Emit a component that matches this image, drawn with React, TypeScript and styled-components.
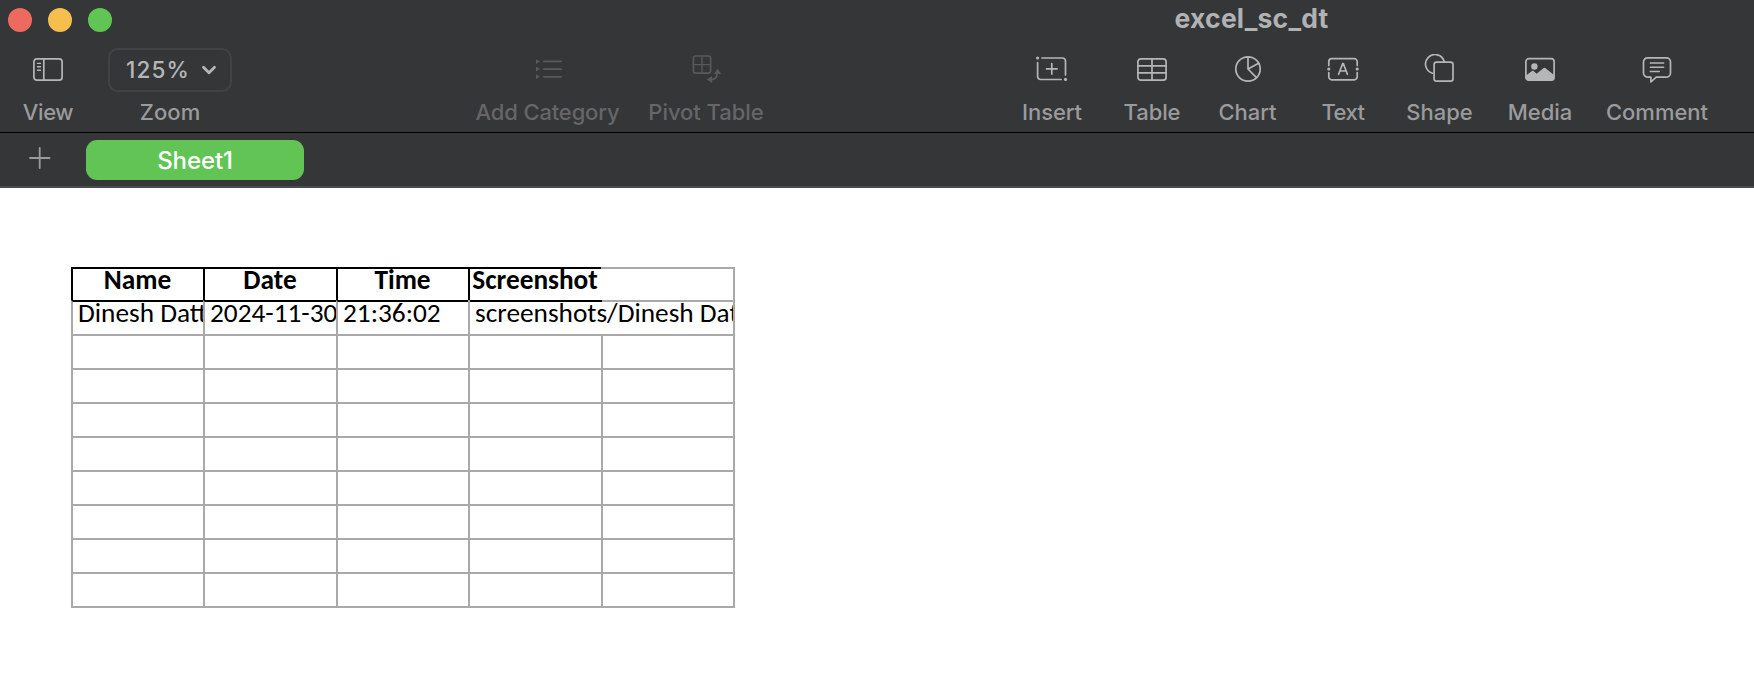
import React from "react";
import styled, { createGlobalStyle } from "styled-components";

const GlobalStyle = createGlobalStyle`
  *, *::before, *::after { box-sizing: border-box; }
  html, body { margin: 0; padding: 0; background: #fff; }
`;

const Window = styled.div`
  display: flex;
  flex-direction: column;
  width: 1754px;
  height: 688px;
  overflow: hidden;
  background: #fff;
  font-family: Inter, "Liberation Sans", sans-serif;
`;

const Header = styled.header`
  display: flex;
  flex-direction: column;
  height: 133px;
  background: #353638;
  border-bottom: 1px solid #000;
`;

const TitleBar = styled.div`
  display: grid;
  grid-template-columns: 749px 1fr;
  align-items: center;
  height: 40px;
`;

const TrafficLights = styled.div`
  display: flex;
  gap: 16px;
  padding-left: 8px;
`;

const Light = styled.span<{ $color: string }>`
  width: 24px;
  height: 24px;
  border-radius: 50%;
  background: ${(p) => p.$color};
`;

const DocTitle = styled.h1`
  margin: 0;
  padding-bottom: 5px;
  text-align: center;
  font-size: 26.5px;
  line-height: 32px;
  font-weight: 700;
  letter-spacing: 0.2px;
  color: #b1b2b4;
`;

const Toolbar = styled.div`
  display: flex;
  justify-content: space-between;
  padding: 8px 34px 0 0;
`;

const ToolGroup = styled.div<{ $trailing?: number }>`
  display: flex;
  margin-right: ${(p) => p.$trailing ?? 0}px;
`;

const ToolButton = styled.div<{ $width: number; $disabled?: boolean }>`
  display: flex;
  flex-direction: column;
  align-items: center;
  width: ${(p) => p.$width}px;
  color: ${(p) => (p.$disabled ? "#58595b" : "#b5b6b8")};
`;

const ToolFace = styled.div`
  display: flex;
  align-items: center;
  justify-content: center;
  height: 44px;
`;

const ToolLabel = styled.span<{ $disabled?: boolean; $spacing?: number }>`
  margin-top: 7px;
  font-size: 22px;
  line-height: 26px;
  font-weight: 450;
  white-space: nowrap;
  letter-spacing: ${(p) => p.$spacing ?? 0}px;
  color: ${(p) => (p.$disabled ? "#656668" : "#9a9b9c")};
`;

const Glyph = styled.svg`
  display: block;
  width: 32px;
  height: 32px;
  fill: none;
  stroke: currentColor;
  stroke-width: 1.7;
  stroke-linecap: round;
  stroke-linejoin: round;

  .solid {
    fill: currentColor;
    stroke: none;
  }
  .thin {
    stroke-width: 1.4;
  }
`;

const ZoomSelect = styled.div`
  display: flex;
  align-items: center;
  justify-content: space-between;
  width: 124px;
  height: 44px;
  padding: 0 13px 1px 16px;
  border: 2px solid #424345;
  border-radius: 10px;
  font-size: 22.5px;
  font-weight: 500;
  letter-spacing: 1.1px;
  color: #b5b6b8;
`;

const Chevron = styled.svg`
  width: 16px;
  height: 12px;
  fill: none;
  stroke: currentColor;
  stroke-width: 2.8;
  stroke-linecap: round;
  stroke-linejoin: round;
`;

const SheetBar = styled.nav`
  display: flex;
  align-items: center;
  height: 55px;
  padding: 0 0 1px 29px;
  background: #353638;
  border-bottom: 2px solid #4a4b4d;
`;

const AddSheet = styled.svg`
  width: 22px;
  height: 22px;
  margin-top: -3px;
  margin-right: 35px;
  fill: none;
  stroke: #9a9b9c;
  stroke-width: 1.8;
  stroke-linecap: round;
`;

const SheetTab = styled.div`
  display: flex;
  align-items: center;
  justify-content: center;
  width: 218px;
  height: 40px;
  margin-top: 1px;
  padding-top: 2px;
  border-radius: 11px;
  background: #61c455;
  color: #fff;
  font-size: 24px;
  font-weight: 500;
  letter-spacing: -0.1px;
`;

const Canvas = styled.main`
  flex: 1;
  padding: 79px 0 0 71px;
`;

const SheetGrid = styled.div`
  display: grid;
  grid-template-columns: 132px 133px 132px 133px 132px;
  grid-template-rows: 33px;
  grid-auto-rows: 34px;
  width: 664px;
  border: solid #a9a9a9;
  border-width: 0 2px 2px 0;
  font-family: Carlito, Lato, sans-serif;
  font-size: 27.3px;
  line-height: 22px;
  color: #000;
`;

const Cell = styled.div<{ $span?: number; $topBlack?: boolean }>`
  grid-column: span ${(p) => p.$span ?? 1};
  min-width: 0;
  padding-left: 5px;
  overflow: hidden;
  white-space: nowrap;
  border-left: 2px solid #a9a9a9;
  border-top: 2px solid ${(p) => (p.$topBlack ? "#000" : "#a9a9a9")};
`;

const HeaderCell = styled(Cell)`
  display: flex;
  justify-content: center;
  padding: 0 1px 0 0;
  overflow: visible;
  font-weight: 700;
  border-color: #000;
`;

const BlankHeaderCell = styled(Cell)`
  border-left: 0;
`;

/* The last value runs on into its empty neighbour, so the rule above it changes colour half way. */
const SpillCell = styled(Cell)`
  border-top: 0;
  padding-top: 2px;
  background: linear-gradient(to right, #000 132px, #a9a9a9 132px) top / 100% 2px no-repeat;
`;

const icons: Record<string, React.ReactNode> = {
  view: (
    <>
      <rect x="1.9" y="4.8" width="28.2" height="21.4" rx="3" />
      <path d="M11.8 5v21" />
      <path className="thin" d="M5.5 9.4h3M5.5 12.8h3M5.5 16.2h3" />
    </>
  ),
  category: (
    <>
      <path d="M11.7 7.4h17.5M11.7 15.1h17.5M11.7 22.8h17.5" />
      <path className="solid" d="M4 4.9v5l3.8-2.5zM4 12.6v5l3.8-2.5zM4 20.3v5l3.8-2.5z" />
    </>
  ),
  pivot: (
    <>
      <rect x="3.4" y="2" width="17.2" height="17.2" rx="2.4" />
      <path className="thin" d="M12 2v17M3.4 10.6h17.2" />
      <path d="M20.5 25.6c4.2 0 6.7-2.3 6.9-6.6" />
      <path className="solid" d="M16.8 25.5l5.3-3.6v7.1zM27.6 14.8l-3.7 5.3h7.3z" />
    </>
  ),
  insert: (
    <>
      <circle className="solid" cx="1.6" cy="4" r="1.6" />
      <circle className="solid" cx="29.5" cy="25.4" r="1.6" />
      <path d="M6 4h20.5a3 3 0 0 1 3 3v14M1.6 8.5v14a3 3 0 0 0 3 3h20.5M10.5 14.8h10.6M15.8 9.5v10.6" />
    </>
  ),
  table: (
    <>
      <rect x="1.9" y="4.8" width="28.2" height="21.4" rx="3" />
      <path d="M16 5v21M2 11.8h28M2 18.9h28" />
    </>
  ),
  chart: (
    <>
      <circle cx="16" cy="15" r="12.2" />
      <path d="M16 3v12l10.6-5.8M16 15l8.4 8.6" />
    </>
  ),
  text: (
    <>
      <path d="M1.8 11.4v-3.8a3 3 0 0 1 3-3h22.4a3 3 0 0 1 3 3v3.8M1.8 18.6v4.2a3 3 0 0 0 3 3h22.4a3 3 0 0 0 3-3v-4.2" />
      <circle className="solid" cx="1.8" cy="15" r="1.6" />
      <circle className="solid" cx="30.2" cy="15" r="1.6" />
      <path d="M11.6 20.3l4-10.6h.8l4 10.6M13 17h6" />
    </>
  ),
  shape: (
    <>
      <path d="M8.4 19.2A9.5 9.5 0 1 1 20.2 7.6" />
      <rect x="10.1" y="8.2" width="18.9" height="18.9" rx="2.4" />
    </>
  ),
  media: (
    <>
      <rect x="1.9" y="4.6" width="28.2" height="21.6" rx="3" />
      <circle className="solid" cx="10.4" cy="12.5" r="3.2" />
      <path
        className="solid"
        d="M2 21.500l5.600-4.300c.8-.6 1.500-.6 2.200 0l2.900 2.500 6.300-5.300c1-.8 1.900-.8 2.900 0l8.100 6.600v3.500c0 1.200-1 2-2.200 2H4.200c-1.200 0-2.200-.8-2.200-2z"
      />
    </>
  ),
  comment: (
    <>
      <path d="M6.5 3.900h19a4 4 0 0 1 4 4v11.200a4 4 0 0 1-4 4H15.200L9.900 28v-4.900H6.500a4 4 0 0 1-4-4V7.900a4 4 0 0 1 4-4z" />
      <path className="thin" d="M9.300 9h13.400M9.300 13.300h13.400M9.300 17.500h9" />
    </>
  ),
};

interface ToolProps {
  label: string;
  width: number;
  icon?: string;
  disabled?: boolean;
  spacing?: number;
  children?: React.ReactNode;
}

const Tool = ({ label, width, icon, disabled, spacing, children }: ToolProps) => (
  <ToolButton $width={width} $disabled={disabled}>
    <ToolFace>
      {icon ? <Glyph viewBox="0 0 32 32">{icons[icon]}</Glyph> : children}
    </ToolFace>
    <ToolLabel $disabled={disabled} $spacing={spacing}>
      {label}
    </ToolLabel>
  </ToolButton>
);

const documentTools: ToolProps[] = [
  { label: "Insert", icon: "insert", width: 100, spacing: -0.1 },
  { label: "Table", icon: "table", width: 100, spacing: -0.1 },
  { label: "Chart", icon: "chart", width: 91 },
  { label: "Text", icon: "text", width: 100, spacing: -0.6 },
  { label: "Shape", icon: "shape", width: 93 },
  { label: "Media", icon: "media", width: 108 },
  { label: "Comment", icon: "comment", width: 126 },
];

const headings = ["Name", "Date", "Time", "Screenshot"];
const record = ["Dinesh Datt", "2024-11-30", "21:36:02"];
const emptyCells = Array.from({ length: 8 * 5 }, (_, i) => i);

export default function App() {
  return (
    <Window>
      <GlobalStyle />
      <Header>
        <TitleBar>
          <TrafficLights>
            <Light $color="#ed6a5f" />
            <Light $color="#f5bf4f" />
            <Light $color="#61c554" />
          </TrafficLights>
          <DocTitle>excel_sc_dt</DocTitle>
        </TitleBar>
        <Toolbar>
          <ToolGroup>
            <Tool label="View" icon="view" width={96} spacing={-0.4} />
            <Tool label="Zoom" width={148} spacing={0.1}>
              <ZoomSelect>
                125%
                <Chevron viewBox="0 0 16 12">
                  <path d="M2.5 3.200L8 8.800l5.500-5.600" />
                </Chevron>
              </ZoomSelect>
            </Tool>
          </ToolGroup>
          <ToolGroup $trailing={10}>
            <Tool label="Add Category" icon="category" width={176} spacing={-0.15} disabled />
            <Tool label="Pivot Table" icon="pivot" width={141} spacing={-0.05} disabled />
          </ToolGroup>
          <ToolGroup>
            {documentTools.map((tool) => (
              <Tool key={tool.label} {...tool} />
            ))}
          </ToolGroup>
        </Toolbar>
      </Header>
      <SheetBar>
        <AddSheet viewBox="0 0 22 22">
          <path d="M1 11h19.500M10.700 1v20" />
        </AddSheet>
        <SheetTab>Sheet1</SheetTab>
      </SheetBar>
      <Canvas>
        <SheetGrid>
          {headings.map((heading) => (
            <HeaderCell key={heading}>{heading}</HeaderCell>
          ))}
          <BlankHeaderCell />
          {record.map((value) => (
            <Cell key={value} $topBlack>
              {value}
            </Cell>
          ))}
          <SpillCell $span={2}>screenshots/Dinesh Dat</SpillCell>
          {emptyCells.map((i) => (
            <Cell key={i} />
          ))}
        </SheetGrid>
      </Canvas>
    </Window>
  );
}
